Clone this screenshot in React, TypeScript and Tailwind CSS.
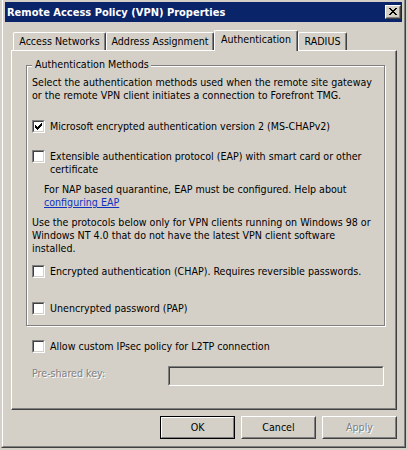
import React from "react";

const font = "font-['DejaVu_Sans_Condensed','DejaVu_Sans',sans-serif]";

function CheckBox({ checked }: { checked?: boolean }) {
  return (
    <span className="block w-[13px] h-[13px] shrink-0 border border-t-[#808080] border-l-[#808080] border-b-white border-r-white">
      <span className="block w-full h-full bg-white border border-t-[#404040] border-l-[#404040] border-b-[#d4d0c8] border-r-[#d4d0c8]">
        {checked && (
          <svg width="9" height="9" viewBox="0 0 9 9" shapeRendering="crispEdges" className="block">
            <path
              d="M1 3h1v3H1zM2 4h1v3H2zM3 5h1v3H3zM4 4h1v3H4zM5 3h1v3H5zM6 2h1v3H6zM7 1h1v3H7z"
              fill="#000"
            />
          </svg>
        )}
      </span>
    </span>
  );
}

function CheckRow({ checked, children }: { checked?: boolean; children: React.ReactNode }) {
  return (
    <div className="flex items-start gap-[5px]">
      <CheckBox checked={checked} />
      <span className="leading-[13px]">{children}</span>
    </div>
  );
}

function Tab({ label, w, selected }: { label: string; w: string; selected?: boolean }) {
  if (selected) {
    return (
      <div
        className={`${w} relative z-10 -mb-px h-[21px] bg-[#d4d0c8] border-l border-t border-l-white border-t-white border-r border-r-[#404040] rounded-t-[2px] shadow-[inset_-1px_0_0_#808080] pt-[2px] text-center leading-[13px]`}
      >
        {label}
      </div>
    );
  }
  return (
    <div
      className={`${w} h-[18px] bg-[#d4d0c8] border-l border-t border-l-white border-t-white border-r border-r-[#404040] rounded-t-[2px] shadow-[inset_-1px_0_0_#808080] pt-[2px] text-center leading-[13px]`}
    >
      {label}
    </div>
  );
}

function Button({ label, isDefault, disabled }: { label: string; isDefault?: boolean; disabled?: boolean }) {
  if (isDefault) {
    return (
      <div className="w-[75px] h-[23px] border border-black">
        <div className="w-full h-full border border-t-white border-l-white border-b-[#808080] border-r-[#808080] flex items-center justify-center leading-[13px]">
          {label}
        </div>
      </div>
    );
  }
  return (
    <div className="w-[75px] h-[23px] border border-t-white border-l-white border-b-[#404040] border-r-[#404040]">
      <div
        className={`w-full h-full border border-t-[#d4d0c8] border-l-[#d4d0c8] border-b-[#808080] border-r-[#808080] flex items-center justify-center leading-[13px] ${
          disabled ? "text-[#808080] [text-shadow:1px_1px_0_#fff]" : ""
        }`}
      >
        {label}
      </div>
    </div>
  );
}

export default function App() {
  return (
    <div className={`w-[408px] h-[450px] bg-[#d4d0c8] pl-[1px] text-[10.6px] text-black ${font}`}>
      <div className="w-[405px] h-[448px] border-r border-b border-r-[#404040] border-b-[#404040] border-l border-l-[#d4d0c8]">
        <div className="w-full h-full border-r border-b border-r-[#808080] border-b-[#808080] border-l border-l-white px-[2px] pt-[2px] pb-[2px] flex flex-col">
          {/* title bar */}
          <div className="h-[20px] bg-[#0a246a] flex items-start justify-between pl-[2px]">
            <span className="text-white font-bold text-[11px] leading-[13px] mt-[4px]">
              Remote Access Policy (VPN) Properties
            </span>
            <div className="mt-[3px] mr-[1px] w-[16px] h-[14px] border border-t-white border-l-white border-b-[#404040] border-r-[#404040] bg-[#d4d0c8]">
              <div className="w-full h-full border border-t-[#d4d0c8] border-l-[#d4d0c8] border-b-[#808080] border-r-[#808080] pl-[2px] pt-[1px]">
                <svg width="8" height="7" viewBox="0 0 8 7" shapeRendering="crispEdges" className="block">
                  <path
                    d="M0 0h2v1H0zM6 0h2v1H6zM1 1h2v1H1zM5 1h2v1H5zM2 2h4v1H2zM3 3h2v1H3zM2 4h4v1H2zM1 5h2v1H1zM5 5h2v1H5zM0 6h2v1H0zM6 6h2v1H6z"
                    fill="#000"
                  />
                </svg>
              </div>
            </div>
          </div>

          {/* tabs */}
          <div className="flex items-end ml-[8px] mt-[8px]">
            <Tab label="Access Networks" w="w-[93px]" />
            <Tab label="Address Assignment" w="w-[108px]" />
            <Tab label="Authentication" w="w-[84px]" selected />
            <Tab label="RADIUS" w="w-[49px]" />
          </div>

          {/* tab panel */}
          <div className="ml-[6px] w-[386px] h-[360px] border-l border-t border-l-white border-t-white border-r border-b border-r-[#404040] border-b-[#404040] shadow-[inset_-1px_-1px_0_#808080] flex flex-col">
            <div className="relative ml-[14px] mt-[14px] w-[359px] h-[261px] border border-[#808080] shadow-[1px_1px_0_#fff,inset_1px_1px_0_#fff] px-[5px] pt-[10px] flex flex-col">
              <span className="absolute left-[5px] top-[-8px] bg-[#d4d0c8] pl-[3px] pr-[2px] leading-[13px]">
                Authentication Methods
              </span>
              <p className="leading-[13px]">
                Select the authentication methods used when the remote site gateway
                <br />
                or the remote VPN client initiates a connection to Forefront TMG.
              </p>
              <div className="mt-[18px]">
                <CheckRow checked>Microsoft encrypted authentication version 2 (MS-CHAPv2)</CheckRow>
              </div>
              <div className="mt-[17px]">
                <CheckRow>
                  Extensible authentication protocol (EAP) with smart card or other
                  <br />
                  certificate
                </CheckRow>
              </div>
              <p className="mt-[7px] pl-[12px] leading-[13px]">
                For NAP based quarantine, EAP must be configured. Help about
                <br />
                <a className="text-[#1030c0] underline underline-offset-[1px] cursor-pointer">configuring EAP</a>
              </p>
              <p className="mt-[7px] leading-[13px]">
                Use the protocols below only for VPN clients running on Windows 98 or
                <br />
                Windows NT 4.0 that do not have the latest VPN client software
                <br />
                installed.
              </p>
              <div className="mt-[10px]">
                <CheckRow>Encrypted authentication (CHAP). Requires reversible passwords.</CheckRow>
              </div>
              <div className="mt-[24px]">
                <CheckRow>Unencrypted password (PAP)</CheckRow>
              </div>
            </div>

            <div className="ml-[20px] mt-[14px]">
              <CheckRow>Allow custom IPsec policy for L2TP connection</CheckRow>
            </div>

            <div className="ml-[20px] mt-[13px] flex items-start">
              <span className="w-[136px] mt-[1px] leading-[13px] text-[#808080] [text-shadow:1px_1px_0_#fff]">
                Pre-shared key:
              </span>
              <div className="w-[216px] h-[20px] border border-t-[#808080] border-l-[#808080] border-b-white border-r-white">
                <div className="w-full h-full bg-[#d4d0c8] border border-t-[#404040] border-l-[#404040] border-b-[#d4d0c8] border-r-[#d4d0c8]" />
              </div>
            </div>
          </div>

          {/* buttons */}
          <div className="mt-[6px] pr-[5px] flex justify-end gap-[6px]">
            <Button label="OK" isDefault />
            <Button label="Cancel" />
            <Button label="Apply" disabled />
          </div>
        </div>
      </div>
    </div>
  );
}
